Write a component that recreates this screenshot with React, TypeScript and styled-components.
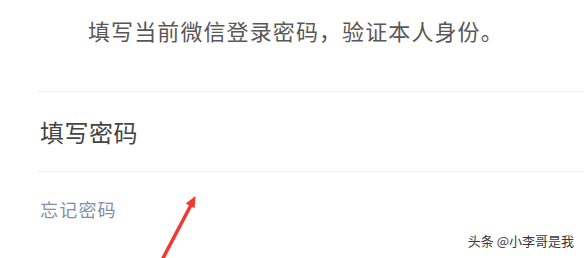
import * as React from 'react';
import styled, { createGlobalStyle } from 'styled-components';

const GlobalStyle = createGlobalStyle`
  html, body {
    margin: 0;
    padding: 0;
    background: #ffffff;
  }
  body {
    font-family: "Noto Sans CJK SC", "Noto Sans", sans-serif;
  }
`;

const Page = styled.div`
  position: relative;
  width: 584px;
  height: 258px;
  overflow: hidden;
  background: #ffffff;
  padding-left: 37px;
  box-sizing: border-box;
  display: flex;
  flex-direction: column;
`;

const Hint = styled.div`
  height: 60px;
  line-height: 60px;
  margin-bottom: 31px;
  padding-left: 51px;
  font-size: 22px;
  letter-spacing: 1.1px;
  color: #585858;
  white-space: nowrap;
`;

const Divider = styled.div`
  height: 1px;
  background: #efefef;
`;

const Field = styled.div`
  height: 79px;
  display: flex;
  align-items: center;
  padding-left: 3px;
  font-size: 24px;
  color: #444444;
  letter-spacing: 0.5px;
`;

const Link = styled.div`
  margin-top: 19px;
  line-height: 36px;
  padding-left: 3px;
  font-size: 18px;
  letter-spacing: 1.2px;
  color: #8090ab;
`;

const Arrow = styled.svg`
  position: absolute;
  left: 150px;
  top: 185px;
  width: 60px;
  height: 73px;
`;

const Watermark = styled.div`
  position: absolute;
  right: 10px;
  bottom: 9px;
  font-size: 13px;
  line-height: 16px;
  color: #3a3a3a;
  text-shadow: 0 0 1px #ffffff;
  white-space: nowrap;
`;

export default function App() {
  return (
    <>
      <GlobalStyle />
      <Page>
        <Hint>填写当前微信登录密码，验证本人身份。</Hint>
        <Divider />
        <Field>填写密码</Field>
        <Divider />
        <Link>忘记密码</Link>
        <Arrow viewBox="0 0 60 73">
          <line x1="12" y1="75" x2="41" y2="20" stroke="#f2392c" strokeWidth="3.5" strokeLinecap="round" />
          <polygon points="45.5,11 44.6,23.2 35.8,18.6" fill="#f2392c" />
        </Arrow>
        <Watermark>头条 @小李哥是我</Watermark>
      </Page>
    </>
  );
}
